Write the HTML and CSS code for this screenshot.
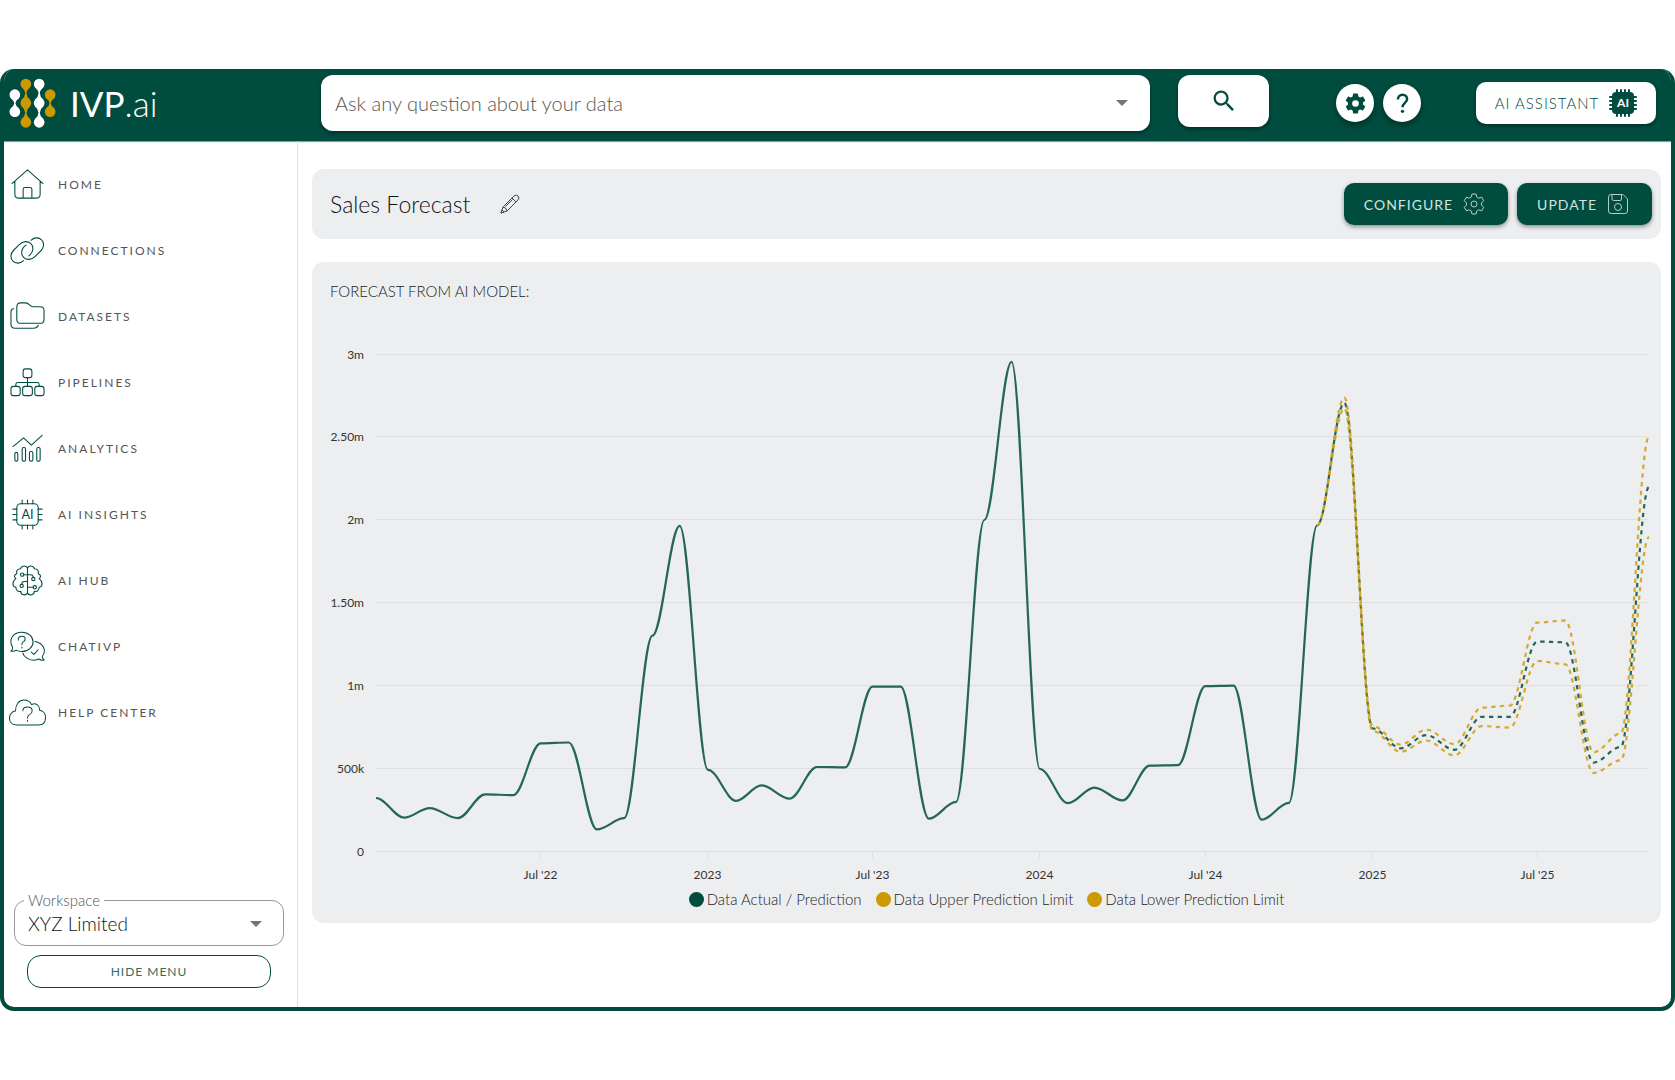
FILE: index.html
```html
<!DOCTYPE html>
<html lang="en">
<head>
    <meta charset="UTF-8">
    <meta name="viewport" content="width=device-width, initial-scale=1.0">
    <title>IVP.ai - Sales Forecast</title>
    <link rel="stylesheet" href="styles.css">
</head>
<body>
    <div class="app">
        <header class="topbar">
            <a class="logo" href="#">
                <svg class="logo-mark" viewBox="28 56 140 150" aria-hidden="true">
                    <g fill="#fff">
                        <circle cx="45" cy="106" r="16"/><circle cx="45" cy="157" r="16"/>
                        <path d="M32 115Q43 124 43 132Q43 140 32 148H58Q47 140 47 132Q47 124 58 115Z"/>
                        <circle cx="118" cy="74" r="16"/><circle cx="118" cy="131" r="16"/><circle cx="118" cy="189" r="16"/>
                        <path d="M105 83Q116 93 116 102Q116 112 105 122H131Q120 112 120 102Q120 93 131 83Z"/>
                        <path d="M105 140Q116 150 116 160Q116 170 105 180H131Q120 170 120 160Q120 150 131 140Z"/>
                    </g>
                    <g fill="#cc9900">
                        <circle cx="78" cy="74" r="16"/><circle cx="78" cy="131" r="16"/><circle cx="78" cy="189" r="16"/>
                        <path d="M65 83Q76 93 76 102Q76 112 65 122H91Q80 112 80 102Q80 93 91 83Z"/>
                        <path d="M65 140Q76 150 76 160Q76 170 65 180H91Q80 170 80 160Q80 150 91 140Z"/>
                        <circle cx="151" cy="106" r="16"/><circle cx="151" cy="157" r="16"/>
                        <path d="M138 115Q149 124 149 132Q149 140 138 148H164Q153 140 153 132Q153 124 164 115Z"/>
                    </g>
                </svg>
                <span class="logo-text"><b>IVP</b>.ai</span>
            </a>
            <form class="search">
                <div class="search-box">
                    <input type="text" aria-label="Ask any question about your data" placeholder="Ask any question about your data">
                    <svg class="caret" viewBox="0 0 12 6" aria-hidden="true"><path d="M0 0h12l-6 6z"/></svg>
                </div>
                <button type="button" class="search-btn" aria-label="Search">
                    <svg viewBox="0 0 24 24" width="28" height="28" aria-hidden="true"><path fill="currentColor" d="M15.5 14h-.79l-.28-.27A6.47 6.47 0 0 0 16 9.5 6.5 6.5 0 1 0 9.5 16c1.61 0 3.09-.59 4.23-1.57l.27.28v.79l5 4.99L20.49 19l-4.99-5zm-6 0C7.01 14 5 11.99 5 9.5S7.01 5 9.5 5 14 7.01 14 9.5 11.99 14 9.5 14z"/></svg>
                </button>
            </form>
            <div class="round-group">
                <button type="button" class="round-btn" aria-label="Settings">
                    <svg viewBox="0 0 24 24" width="25" height="25" aria-hidden="true"><path fill="currentColor" d="M19.14 12.94c.04-.3.06-.61.06-.94 0-.32-.02-.64-.07-.94l2.03-1.58a.49.49 0 0 0 .12-.61l-1.92-3.32a.488.488 0 0 0-.59-.22l-2.39.96c-.5-.38-1.03-.7-1.62-.94l-.36-2.54a.484.484 0 0 0-.48-.41h-3.84c-.24 0-.43.17-.47.41l-.36 2.54c-.59.24-1.13.57-1.62.94l-2.39-.96c-.22-.08-.47 0-.59.22L2.74 8.87c-.12.21-.08.47.12.61l2.03 1.58c-.05.3-.09.63-.09.94s.02.64.07.94l-2.03 1.58a.49.49 0 0 0-.12.61l1.92 3.32c.12.22.37.29.59.22l2.39-.96c.5.38 1.03.7 1.62.94l.36 2.54c.05.24.24.41.48.41h3.84c.24 0 .44-.17.47-.41l.36-2.54c.59-.24 1.13-.56 1.62-.94l2.39.96c.22.08.47 0 .59-.22l1.92-3.32c.12-.22.07-.47-.12-.61l-2.01-1.58zM12 15.2a3.2 3.2 0 1 1 0-6.4 3.2 3.2 0 0 1 0 6.4z"/></svg>
                </button>
                <button type="button" class="round-btn" aria-label="Help">
                    <svg viewBox="0 0 24 24" width="25" height="25" aria-hidden="true"><path fill="none" stroke="currentColor" stroke-width="2.4" d="M7.6 8.2C7.6 5.400 9.500 3.600 12 3.600s4.400 1.700 4.400 4.300c0 3.200-4.400 3.900-4.400 7.600"/><circle fill="currentColor" cx="12" cy="19.500" r="1.600"/></svg>
                </button>
            </div>
            <button type="button" class="assistant-btn">
                <span>AI ASSISTANT</span>
                <svg viewBox="0 0 28 28" width="28" height="28" aria-hidden="true">
                    <rect x="3" y="3" width="22" height="22" rx="4" fill="currentColor"/>
                    <path stroke="currentColor" stroke-width="2" stroke-linecap="round" d="M8 1v26M12 1v26M16 1v26M20 1v26M1 8h26M1 12h26M1 16h26M1 20h26"/>
                    <text class="chip-text" x="14" y="18" fill="#fff">AI</text>
                </svg>
            </button>
        </header>

        <div class="body">
            <aside class="sidebar">
                <nav class="menu">
                    <a href="#">
                        <svg class="icon" viewBox="0 0 36 36" aria-hidden="true"><path d="M2 17 18 3l16 14M5 15v13q0 4 4 4h18q4 0 4-4V15M13.500 32V23q0-2 2-2h5q2 0 2 2v9"/></svg>
                        HOME
                    </a>
                    <a href="#">
                        <svg class="icon" viewBox="0 0 36 36" aria-hidden="true"><path d="M14 28.500c-3 3-8 3.500-11 .5s-2.500-8 .5-11l6-6c4-4 9-4 12-1s2.500 8-.5 11l-1.500 1.500M21.500 7.500c3-3 8-3.500 11-.5s2.500 8-.5 11l-6 6c-4 4-9 4-12 1s-2.500-8 .5-11l2-1.500"/></svg>
                        CONNECTIONS
                    </a>
                    <a href="#">
                        <svg class="icon" viewBox="0 0 36 36" aria-hidden="true"><path d="M7 8q0-4 4-4h5q2 0 4 2t4 2h7q4 0 4 4v9q0 4-4 4H11q-4 0-4-4zM4 10q-3 0-3 3v13q0 4 4 4h19q4 0 5-3"/></svg>
                        DATASETS
                    </a>
                    <a href="#">
                        <svg class="icon" viewBox="0 0 36 36" aria-hidden="true"><rect x="13.500" y="4" width="9" height="9" rx="2.500"/><rect x="1" y="22" width="9.500" height="9.500" rx="2.500"/><rect x="13" y="22" width="10" height="9.500" rx="2.500"/><rect x="25.500" y="22" width="9.500" height="9.500" rx="2.500"/><path d="M18 13v9M6 22v-2q0-2 2-2h20q2 0 2 2v2"/></svg>
                        PIPELINES
                    </a>
                    <a href="#">
                        <svg class="icon" viewBox="0 0 36 36" aria-hidden="true"><path d="M3 16 14 7l8 7.500L33 4.500"/><rect x="5" y="22" width="3" height="9" rx="1.500"/><rect x="12.500" y="17" width="3.500" height="14" rx="1.500"/><rect x="20" y="21" width="3.500" height="10" rx="1.500"/><rect x="27.500" y="17" width="3.500" height="14" rx="1.500"/></svg>
                        ANALYTICS
                    </a>
                    <a href="#">
                        <svg class="icon" viewBox="0 0 36 36" aria-hidden="true"><rect x="7" y="7" width="22" height="22" rx="4"/><path d="M12.500 3v4M18 3v4M23.500 3v4M12.500 29v4M18 29v4M23.500 29v4M3 12.500h4M3 18h4M3 23.500h4M29 12.500h4M29 18h4M29 23.500h4"/><text class="icon-text" x="18" y="22.500">AI</text></svg>
                        AI INSIGHTS
                    </a>
                    <a href="#">
                        <svg class="icon" viewBox="0 0 36 36" aria-hidden="true"><path d="M18 5v26M18 5c-2-3-7-2-7 1-3 0-5 2-4 5-3 1-3 4-1 5-4 3-4 8 0 9 0 3 2 5 5 4 0 4 5 5 7 2M18 5c2-3 7-2 7 1 3 0 5 2 4 5 3 1 3 4 1 5 4 3 4 8 0 9 0 3-2 5-5 4 0 4-5 5-7 2M14 12h7q3 0 3 3M18 19h-3q-3 0-3 3M18 25h6"/><circle cx="12.500" cy="12" r="1.700"/><circle cx="24" cy="16.500" r="1.700"/><circle cx="12" cy="23.500" r="1.700"/><circle cx="25.500" cy="25" r="1.700"/></svg>
                        AI HUB
                    </a>
                    <a href="#">
                        <svg class="icon icon-wide" viewBox="0 0 40 36" aria-hidden="true"><path d="M4 19C-1 11 4 2.500 14 2.500c7 0 12 5 12 10.500S21 23.500 14 23.500q-4 0-6-1.500-3 1.500-6 1 2-1 2-4zM28 12.500c9 1.500 13 10 8 16q0 3 2 4-3 1-6-1-9 4-16-4l-1-2.500"/><path d="M10 11q0-4 4-4 3.500 0 3.500 3 0 2-2 3T14 16M14 18.500v1M24 24l3 2.500 4.500-5"/></svg>
                        CHATIVP
                    </a>
                    <a href="#">
                        <svg class="icon icon-wide" viewBox="0 0 40 36" aria-hidden="true"><path d="M8 31.500C2 31.500.5 27 .5 24s2-7 6.500-7.500C7 9 11 4.500 16 4.500q6 0 8.500 5c4-2.500 9 .5 8.500 6 4 .5 6.500 4 6.500 8 0 5-3 8-7.500 8z"/><path d="M15 16q0-4 5-4t5 4q0 3-2.500 4T20 24M20 26.500v1"/></svg>
                        HELP CENTER
                    </a>
                </nav>

                <div class="workspace-area">
                    <fieldset class="workspace">
                        <legend><label for="workspace">Workspace</label></legend>
                        <select id="workspace">
                            <option>XYZ Limited</option>
                        </select>
                        <svg class="caret" viewBox="0 0 12 6" aria-hidden="true"><path d="M0 0h12l-6 6z"/></svg>
                    </fieldset>
                    <button type="button" class="hide-btn">HIDE MENU</button>
                </div>
            </aside>

            <main class="content">
                <section class="card title-card">
                    <h1>Sales Forecast</h1>
                    <button type="button" class="edit-btn" aria-label="Edit name">
                        <svg viewBox="0 0 20 20" width="20" height="20" aria-hidden="true"><path d="M1 19l2-6L14 2q2-2 4 0t0 4L7 17zM3 13q3 0 4 4M12 4l4 4M5.500 12.500l7-7M1 19l1-3 2 2z"/></svg>
                    </button>
                    <div class="actions">
                        <button type="button" class="action-btn">
                            CONFIGURE
                            <svg viewBox="0 0 22 22" width="22" height="22" aria-hidden="true"><path d="M9 1h4l.7 3 2 1.200 3-1 2 3.500L18.500 10v2l2.200 2.300-2 3.500-3-1-2 1.200L13 21H9l-.7-3-2-1.200-3 1-2-3.500L3.500 12v-2L1.300 7.700l2-3.500 3 1 2-1.200z"/><circle cx="11" cy="11" r="3"/></svg>
                        </button>
                        <button type="button" class="action-btn">
                            UPDATE
                            <svg viewBox="0 0 22 22" width="22" height="22" aria-hidden="true"><path d="M4 1.500h12L20.500 6v12q0 2.500-2.500 2.500H4Q1.500 20.500 1.500 18V4Q1.500 1.500 4 1.500zM5 1.500V6q0 1.500 1.500 1.500H13q1.500 0 1.500-1.500V1.500"/><circle cx="11" cy="14" r="3.500"/></svg>
                        </button>
                    </div>
                </section>

                <section class="card chart-card">
                    <h2>FORECAST FROM AI MODEL:</h2>
                    <svg class="chart" id="chart" role="img" aria-label="Sales forecast"></svg>
                    <ul class="legend">
                        <li><span class="dot"></span>Data Actual / Prediction</li>
                        <li><span class="dot dot-gold"></span>Data Upper Prediction Limit</li>
                        <li><span class="dot dot-gold"></span>Data Lower Prediction Limit</li>
                    </ul>
                </section>
            </main>
        </div>
    </div>

    <script src="script.js"></script>
</body>
</html>
```
FILE: styles.css
```css
* {
    box-sizing: border-box;
}

body {
    margin: 0;
    padding: 69px 0;
    background: #fff;
    font-family: Lato, "Open Sans", sans-serif;
    font-weight: 300;
    color: #222;
}

button,
input,
select {
    font-family: inherit;
    font-weight: inherit;
}

button {
    cursor: pointer;
}

.app {
    min-height: calc(100vh - 138px);
    display: flex;
    flex-direction: column;
    border: 4px solid #004d40;
    border-top: none;
    border-radius: 14px;
    overflow: hidden;
    background: #fff;
}

/* top bar */
.topbar {
    height: 72px;
    display: flex;
    align-items: center;
    padding: 0 15px 4px 0;
    background: #004d40;
    box-shadow: 0 1px 1px rgba(0, 0, 0, 0.4);
}

.logo {
    width: 317px;
    flex-shrink: 0;
    display: flex;
    align-items: center;
    gap: 14px;
    padding-left: 5px;
    color: #fff;
    text-decoration: none;
}

.logo-mark {
    width: 47px;
    height: 50px;
}

.logo-text {
    font-size: 35px;
}

.logo-text b {
    font-weight: 400;
}

.search {
    flex: 1;
    display: flex;
    align-items: flex-start;
    gap: 28px;
    margin-right: 67px;
}

.search-box {
    flex: 1;
    height: 56px;
    display: flex;
    align-items: center;
    padding: 0 22px 0 14px;
    border-radius: 12px;
    background: #fff;
    box-shadow: 0 2px 4px rgba(0, 0, 0, 0.4);
}

.search-box input {
    flex: 1;
    border: none;
    outline: none;
    padding: 0;
    background: none;
    font-size: 20px;
    color: #333;
}

.search-box input::placeholder {
    color: #555;
    opacity: 1;
}

.caret {
    width: 12px;
    height: 6px;
    fill: #757575;
}

.search-btn {
    width: 91px;
    height: 52px;
    display: flex;
    align-items: center;
    justify-content: center;
    border: none;
    border-radius: 12px;
    background: #fff;
    color: #004d40;
    box-shadow: 0 2px 4px rgba(0, 0, 0, 0.4);
}

.round-group {
    display: flex;
    gap: 9px;
    margin-right: 55px;
}

.round-btn {
    width: 38px;
    height: 38px;
    display: flex;
    align-items: center;
    justify-content: center;
    padding: 0;
    border: none;
    border-radius: 50%;
    background: #fff;
    color: #004d40;
    box-shadow: 0 3px 7px rgba(0, 0, 0, 0.4);
}

.assistant-btn {
    width: 180px;
    height: 42px;
    display: flex;
    align-items: center;
    justify-content: center;
    gap: 10px;
    padding: 0;
    border: none;
    border-radius: 10px;
    background: #fff;
    color: #004d40;
    font-size: 15px;
    letter-spacing: 1px;
    box-shadow: 0 2px 4px rgba(0, 0, 0, 0.4);
}

.chip-text {
    font-size: 12px;
    font-weight: 700;
    letter-spacing: 0;
    text-anchor: middle;
}

.body {
    flex: 1;
    display: flex;
}

/* sidebar */
.sidebar {
    width: 294px;
    flex-shrink: 0;
    display: flex;
    flex-direction: column;
    justify-content: space-between;
    border-right: 1px solid #e0e0e0;
}

.menu {
    display: flex;
    flex-direction: column;
    padding-top: 10px;
}

.menu a {
    height: 66px;
    display: flex;
    align-items: center;
    gap: 13px;
    padding-left: 6px;
    color: #555;
    font-size: 12px;
    font-weight: 400;
    letter-spacing: 2px;
    text-decoration: none;
}

.icon {
    width: 35px;
    height: 35px;
    fill: none;
    stroke: #004d40;
    stroke-width: 1.1;
    stroke-linecap: round;
    stroke-linejoin: round;
}

.icon-wide {
    width: 37px;
    margin: 0 -1px;
}

.icon-text {
    fill: #004d40;
    stroke: none;
    font-size: 13px;
    font-weight: 400;
    letter-spacing: 0;
    text-anchor: middle;
}

.workspace-area {
    padding: 0 13px 19px 10px;
}

.workspace {
    height: 54px;
    display: grid;
    grid-template-columns: 1fr 12px;
    align-items: center;
    margin: 0;
    padding: 0 21px 6px 13px;
    border: 1px solid #999;
    border-radius: 12px;
}

.workspace legend {
    margin-left: -4px;
    padding: 0 4px;
    font-size: 15px;
    line-height: 16px;
    color: #555;
}

.workspace select {
    appearance: none;
    border: none;
    outline: none;
    padding: 0;
    background: none;
    font-size: 19px;
    color: #111;
}

.hide-btn {
    width: calc(100% - 26px);
    height: 33px;
    display: block;
    margin: 9px 13px 0;
    border: 1px solid #004d40;
    border-radius: 14px;
    background: #fff;
    color: #2f6d62;
    font-size: 12px;
    font-weight: 400;
    letter-spacing: 1px;
}

/* main area */
.content {
    flex: 1;
    min-width: 0;
    display: flex;
    flex-direction: column;
    gap: 23px;
    padding: 28px 10px 28px 14px;
}

.card {
    border-radius: 12px;
    background: #edeef0;
}

.title-card {
    height: 70px;
    display: flex;
    align-items: center;
    padding: 0 9px 0 18px;
}

.title-card h1 {
    margin: 0;
    font-size: 23px;
    font-weight: 300;
    color: #111;
}

.edit-btn {
    display: flex;
    margin-left: 30px;
    padding: 0;
    border: none;
    background: none;
}

.edit-btn svg {
    fill: none;
    stroke: #444;
    stroke-width: 1;
    stroke-linejoin: round;
}

.actions {
    display: flex;
    gap: 9px;
    margin-left: auto;
}

.action-btn {
    height: 42px;
    display: flex;
    align-items: center;
    gap: 10px;
    padding: 0 23px 0 20px;
    border: none;
    border-radius: 10px;
    background: #004d40;
    color: #d5e1df;
    font-size: 14px;
    font-weight: 400;
    letter-spacing: 1px;
    box-shadow: 0 2px 4px rgba(0, 0, 0, 0.4);
}

.action-btn svg {
    fill: none;
    stroke: #b5cbc7;
    stroke-width: 1;
    stroke-linejoin: round;
}

.chart-card h2 {
    margin: 0;
    padding: 20px 18px 0;
    font-size: 15px;
    line-height: 18px;
    font-weight: 300;
    color: #222;
}

.chart {
    width: 100%;
    height: 552px;
    display: block;
    margin-top: 35px;
}

.grid-line {
    stroke: #dddfe1;
    stroke-width: 1;
}

.axis-label {
    font-size: 12px;
    font-weight: 400;
    fill: #333;
}

.label-y {
    text-anchor: end;
}

.label-x {
    text-anchor: middle;
}

.line {
    fill: none;
    stroke: #004d40;
    stroke-width: 2.2;
    opacity: 0.85;
}

.line-dashed {
    stroke-dasharray: 4.4 4.4;
    stroke-dashoffset: 4.4;
}

.line-limit {
    stroke: #cc9900;
    stroke-dashoffset: 0;
    opacity: 0.8;
}

.legend {
    display: flex;
    justify-content: center;
    gap: 14px;
    margin: 0;
    padding: 3px 0 15px;
    list-style: none;
    font-size: 15px;
    line-height: 18px;
    color: #222;
}

.legend li {
    display: flex;
    align-items: center;
    gap: 3px;
}

.dot {
    width: 15px;
    height: 15px;
    border-radius: 50%;
    background: #004d40;
}

.dot-gold {
    background: #cc9900;
}
```
FILE: script.js
```javascript
// monthly values in thousands, first one is Jan 2022
const actual = [
    320, 201, 259, 198, 342, 337, 650, 655, 130, 198, 1300, 1963,
    490, 303, 396, 316, 507, 505, 992, 992, 195, 296, 1998, 2952,
    495, 289, 383, 305, 515, 518, 995, 998, 189, 290, 1965
];

// forecast starts at the last actual month, Nov 2024
const forecastStart = 34;
const prediction = [1965, 2705, 740, 620, 700, 611, 810, 810, 1264, 1260, 534, 628, 2198];
const upper = [1965, 2737, 755, 642, 732, 645, 865, 878, 1379, 1391, 596, 710, 2500];
const lower = [1965, 2672, 725, 599, 667, 577, 754, 745, 1147, 1127, 471, 547, 1895];

const yTicks = [[0, "0"], [500, "500k"], [1000, "1m"], [1500, "1.50m"], [2000, "2m"], [2500, "2.50m"], [3000, "3m"]];
const xTicks = [[6, "Jul '22"], [12, "2023"], [18, "Jul '23"], [24, "2024"], [30, "Jul '24"], [36, "2025"], [42, "Jul '25"]];

const lastMonth = 46;
const margin = { top: 19, right: 12, left: 64 };
const plotHeight = 497;

function time(month) {
    return Date.UTC(2022, month, 1);
}

function drawChart() {
    const svg = document.getElementById("chart");
    const plotWidth = svg.getBoundingClientRect().width - margin.left - margin.right;
    const bottom = margin.top + plotHeight;
    const px = (month) => margin.left + plotWidth * (time(month) - time(0)) / (time(lastMonth) - time(0));
    const py = (value) => bottom - plotHeight * value / 3000;

    function smoothPath(values, start) {
        let d = `M${px(start)} ${py(values[0])}`;
        for (let i = 1; i < values.length; i++) {
            const x0 = px(start + i - 1);
            const x1 = px(start + i);
            const bend = (x1 - x0) * 0.35;
            d += `C${x0 + bend} ${py(values[i - 1])} ${x1 - bend} ${py(values[i])} ${x1} ${py(values[i])}`;
        }
        return d;
    }

    let html = "";
    yTicks.forEach(([value, label]) => {
        const y = Math.floor(py(value)) + 0.5;
        html += `<line class="grid-line" x1="${margin.left}" x2="${margin.left + plotWidth}" y1="${y}" y2="${y}"/>`;
        html += `<text class="axis-label label-y" x="${margin.left - 12}" y="${y + 4}">${label}</text>`;
    });
    xTicks.forEach(([month, label]) => {
        const x = Math.floor(px(month)) + 0.5;
        html += `<line class="grid-line" x1="${x}" x2="${x}" y1="${bottom}" y2="${bottom + 7}"/>`;
        html += `<text class="axis-label label-x" x="${x}" y="${bottom + 28}">${label}</text>`;
    });
    html += `<path class="line" d="${smoothPath(actual, 0)}"/>`;
    html += `<path class="line line-dashed" d="${smoothPath(prediction, forecastStart)}"/>`;
    html += `<path class="line line-dashed line-limit" d="${smoothPath(upper, forecastStart)}"/>`;
    html += `<path class="line line-dashed line-limit" d="${smoothPath(lower, forecastStart)}"/>`;
    svg.innerHTML = html;
}

drawChart();
window.addEventListener("resize", drawChart);
```
